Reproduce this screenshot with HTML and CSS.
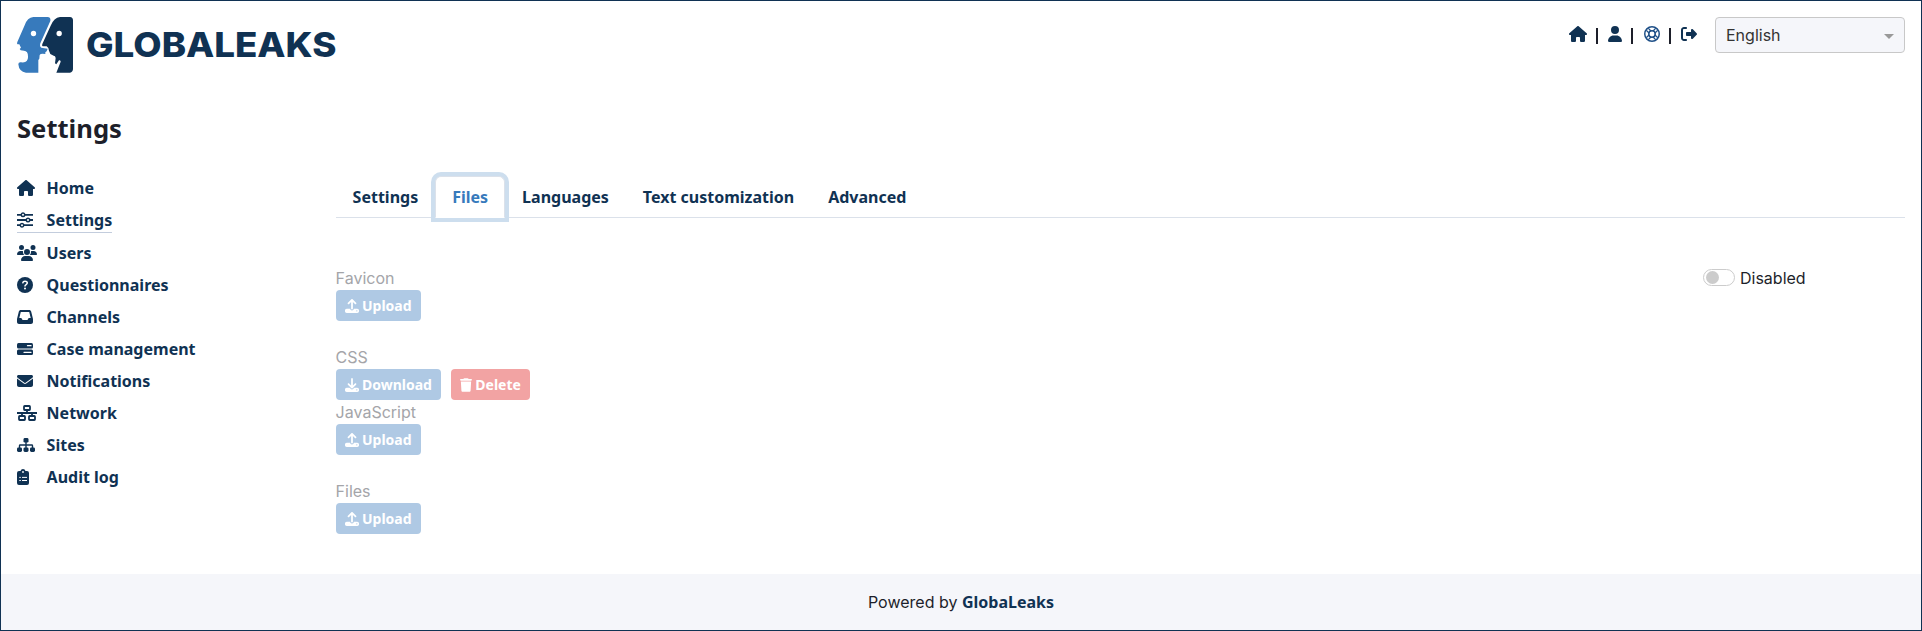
FILE: index.html
```html
<!DOCTYPE html>
<html lang="en">
<head>
<meta charset="utf-8">
<title>GlobaLeaks - Settings</title>
<link rel="stylesheet" href="styles.css">
</head>
<body>
<svg class="defs" width="0" height="0">
  <symbol id="house" viewBox="0 0 576 512"><path d="M575.8 255.5c0 18-15 32.1-32 32.1l-32 0 .7 160.2c0 2.7-.2 5.4-.5 8.1l0 16.2c0 22.1-17.9 40-40 40l-16 0c-1.1 0-2.2 0-3.3-.1c-1.4 .1-2.8 .1-4.2 .1L416 512l-24 0c-22.1 0-40-17.9-40-40l0-24 0-64c0-17.7-14.3-32-32-32l-64 0c-17.7 0-32 14.3-32 32l0 64 0 24c0 22.1-17.9 40-40 40l-24 0-31.9 0c-1.5 0-3-.1-4.5-.2c-1.2 .1-2.4 .2-3.6 .2l-16 0c-22.1 0-40-17.9-40-40l0-112c0-.9 0-1.9 .1-2.8l0-69.7-32 0c-18 0-32-14-32-32.1c0-9 3-17 10-24L266.4 8c7-7 15-8 22-8s15 2 21 7L564.8 231.5c8 7 12 15 11 24z"/></symbol>
  <symbol id="upload" viewBox="0 0 512 512"><path d="M288 109.3V352c0 17.700-14.300 32-32 32s-32-14.300-32-32V109.300l-73.400 73.400c-12.500 12.500-32.800 12.500-45.300 0s-12.500-32.800 0-45.300l128-128c12.500-12.500 32.800-12.500 45.300 0l128 128c12.500 12.500 12.500 32.800 0 45.300s-32.800 12.500-45.300 0L288 109.300zM64 352H192c0 35.300 28.700 64 64 64s64-28.700 64-64H448c35.300 0 64 28.700 64 64v32c0 35.300-28.700 64-64 64H64c-35.300 0-64-28.700-64-64v-32c0-35.300 28.700-64 64-64zM432 456a24 24 0 1 0 0-48 24 24 0 1 0 0 48z"/></symbol>
</svg>
<div class="page">
  <header class="header">
    <svg class="logo" width="322" height="58" viewBox="0 0 322 58">
      <g transform="scale(.33333) translate(-21 -21)">
        <path fill="#377abc" d="M70 21H113Q123 22 121 33L91 100Q88 109 94 113L103 115L113 116L110 124L106 127V132Q92 129 89 135L88 146L85 150V188H48Q27 185 25 163Q25 156 33 157Q54 160 54 142Q55 123 42 122L32 121L29 117L33 113L28 103H23Q20 101 22 96L44 46Q52 22 70 21Z"/>
        <path fill="#103253" d="M150 21H180Q189 22 189 31V178Q188 187 180 188H139L152 155Q152 149 147 151L139 163L135 160L137 144Q136 137 131 137L121 132L117 122L115 114L110 109H98Q95 107 97 102L122 47Q132 23 150 21Z"/>
        <circle cx="70.500" cy="70.500" r="8" fill="#fff"/><circle cx="147.500" cy="70.500" r="8" fill="#fff"/>
      </g>
      <text class="wordmark" x="69" y="39.700" textLength="250.500" lengthAdjust="spacingAndGlyphs">GLOBALEAKS</text>
    </svg>
    <div class="tools">
      <svg class="i" width="18" height="16"><use href="#house"/></svg>
      <span class="bar"></span>
      <svg class="i" width="14" height="16" viewBox="0 0 448 512"><path d="M224 256A128 128 0 1 0 224 0a128 128 0 1 0 0 256zm-45.700 48C79.800 304 0 383.800 0 482.300C0 498.700 13.300 512 29.700 512l388.600 0c16.400 0 29.700-13.300 29.700-29.700C448 383.800 368.200 304 269.700 304l-91.400 0z"/></svg>
      <span class="bar"></span>
      <svg class="ring" width="16" height="16" viewBox="0 0 16 16"><circle cx="8" cy="8" r="7.250"/><circle cx="8" cy="8" r="3.200"/><path d="M2.400 4.400l2.800 2.800M4.400 2.400l2.800 2.800M11.600 2.400l-2.800 2.800M13.600 4.400l-2.800 2.800M2.400 11.600l2.800-2.800M4.400 13.600l2.800-2.800M11.600 13.600l-2.800-2.800M13.600 11.600l-2.800-2.800"/></svg>
      <span class="bar"></span>
      <svg class="i" width="16" height="16" viewBox="0 0 512 512"><path d="M377.900 105.900L500.700 228.700c7.200 7.200 11.300 17.100 11.300 27.300s-4.100 20.100-11.300 27.300L377.900 406.100c-6.400 6.400-15 9.900-24 9.900c-18.700 0-33.900-15.200-33.900-33.900l0-62.100-128 0c-17.700 0-32-14.300-32-32l0-64c0-17.700 14.300-32 32-32l128 0 0-62.100c0-18.700 15.200-33.900 33.900-33.900c9 0 17.600 3.600 24 9.900zM160 96L96 96c-17.700 0-32 14.300-32 32l0 256c0 17.700 14.300 32 32 32l64 0c17.700 0 32 14.300 32 32s-14.300 32-32 32l-64 0c-53 0-96-43-96-96L0 128C0 75 43 32 96 32l64 0c17.700 0 32 14.300 32 32s-14.300 32-32 32z"/></svg>
      <div class="select"><span>English</span><i class="caret"></i></div>
    </div>
  </header>
  <h1 class="title">Settings</h1>
  <div class="main">
    <nav class="side">
      <a><svg class="i" width="18" height="16"><use href="#house"/></svg>Home</a>
      <a class="current"><svg class="i" width="16" height="16" viewBox="0 0 16 16"><path d="M0 1.900h3.600a2.600 2.600 0 0 1 4.800 0H16v1.800H8.400a2.600 2.600 0 0 1-4.800 0H0zM0 7.100h8.600a2.600 2.600 0 0 1 4.800 0H16v1.800h-2.600a2.600 2.600 0 0 1-4.800 0H0zM0 12.300h2.600a2.600 2.600 0 0 1 4.800 0H16v1.800H7.400a2.600 2.600 0 0 1-4.800 0H0z"/><g fill="#fff"><circle cx="6" cy="2.800" r="1"/><circle cx="11" cy="8" r="1"/><circle cx="5" cy="13.200" r="1"/></g></svg>Settings</a>
      <a><svg class="i" width="20" height="16" viewBox="0 0 640 512"><path d="M144 0a80 80 0 1 1 0 160A80 80 0 1 1 144 0zM512 0a80 80 0 1 1 0 160A80 80 0 1 1 512 0zM0 298.700C0 239.800 47.800 192 106.700 192h42.700c15.900 0 31 3.500 44.600 9.700c-1.300 7.200-1.900 14.700-1.900 22.300c0 38.200 16.800 72.500 43.300 96H21.300C9.600 320 0 310.400 0 298.700zM405.300 320h-.7c26.600-23.500 43.300-57.800 43.300-96c0-7.600-.7-15-1.900-22.300c13.600-6.300 28.700-9.700 44.600-9.700h42.700C592.200 192 640 239.800 640 298.700c0 11.800-9.600 21.300-21.300 21.300H405.300zM224 224a96 96 0 1 1 192 0 96 96 0 1 1-192 0zM128 485.300C128 411.700 187.700 352 261.300 352H378.700C452.300 352 512 411.700 512 485.300c0 14.700-11.900 26.700-26.700 26.700H154.700c-14.700 0-26.700-11.900-26.700-26.700z"/></svg>Users</a>
      <a><svg class="i" width="16" height="16" viewBox="0 0 16 16"><circle cx="8" cy="8" r="8"/><path fill="none" stroke="#fff" stroke-width="1.500" stroke-linecap="round" d="M5.800 5.800C6 4.500 6.800 4.300 8 4.300c1.500 0 2.300.8 2.300 1.800C10.300 7.600 8 7.500 8 9"/><circle cx="8" cy="11.500" r="1" fill="#fff"/></svg>Questionnaires</a>
      <a><svg class="i" width="16" height="16" viewBox="0 0 512 512"><path d="M121 32C91.600 32 66 52 58.900 80.500L1.900 308.400C.6 313.500 0 318.700 0 323.900L0 416c0 35.300 28.700 64 64 64l384 0c35.300 0 64-28.700 64-64l0-92.100c0-5.200-.6-10.400-1.900-15.500l-57-227.900C446 52 420.400 32 391 32L121 32zm0 64l270 0 48 192-51.200 0c-12.100 0-23.200 6.800-28.600 17.700l-14.300 28.600c-5.400 10.800-16.500 17.700-28.600 17.700l-120.400 0c-12.100 0-23.200-6.800-28.600-17.700l-14.300-28.600c-5.400-10.800-16.500-17.700-28.600-17.700L73 288 121 96z"/></svg>Channels</a>
      <a><svg class="i" width="16" height="16" viewBox="0 0 16 16"><rect y="2" width="16" height="5.400" rx="1.500"/><rect y="8.600" width="16" height="5.400" rx="1.500"/><path fill="none" stroke="#fff" stroke-width="1.300" stroke-linecap="round" d="M10.500 4.700h3.500M7 11.300h7"/></svg>Case management</a>
      <a><svg class="i" width="16" height="16" viewBox="0 0 512 512"><path d="M48 64C21.500 64 0 85.500 0 112c0 15.100 7.100 29.300 19.200 38.400L236.800 313.600c11.400 8.500 27 8.500 38.400 0L492.800 150.400c12.100-9.100 19.200-23.300 19.200-38.400c0-26.500-21.500-48-48-48L48 64zM0 176L0 384c0 35.300 28.700 64 64 64l384 0c35.300 0 64-28.700 64-64l0-208L294.400 339.200c-22.800 17.100-54 17.100-76.800 0L0 176z"/></svg>Notifications</a>
      <a><svg class="net" width="20" height="16" viewBox="0 0 20 16"><rect x="7" y="1" width="6" height="4" rx=".7"/><rect x="2" y="11" width="6" height="4" rx=".7"/><rect x="12" y="11" width="6" height="4" rx=".7"/><path d="M0 8h20M10 5v3M5 8v3M15 8v3"/></svg>Network</a>
      <a><svg class="i" width="18" height="16" viewBox="0 0 18 16"><rect x="6.500" y="1" width="5" height="4.600" rx="1.400"/><rect y="10.400" width="5" height="4.600" rx="1.400"/><rect x="6.500" y="10.400" width="5" height="4.600" rx="1.400"/><rect x="13" y="10.400" width="5" height="4.600" rx="1.400"/><path fill="none" stroke="#103253" stroke-width="1.400" d="M9 5v6M2.500 11V8.700q0-.7.700-.7h11.600q.7 0 .7.700V11"/></svg>Sites</a>
      <a><svg class="i" width="12" height="16" viewBox="0 0 12 16"><path d="M2 2h1.500a2.600 2.600 0 0 1 5 0H10q2 0 2 2v10q0 2-2 2H2q-2 0-2-2V4q0-2 2-2z"/><circle cx="6" cy="3" r=".9" fill="#fff"/><path fill="none" stroke="#fff" d="M2.300 8.400h1.500M5 8.400h5M2.300 11.500h1.500M5 11.500h5"/></svg>Audit log</a>
    </nav>
    <main class="content">
      <div class="tabs"><a>Settings</a><a class="active">Files</a><a>Languages</a><a>Text customization</a><a>Advanced</a></div>
      <div class="pane">
        <div class="files">
          <label>Favicon</label>
          <div class="row gap"><button class="btn"><svg width="14" height="14"><use href="#upload"/></svg>Upload</button></div>
          <label>CSS</label>
          <div class="row"><button class="btn"><svg width="14" height="14" viewBox="0 0 512 512"><path d="M288 32c0-17.700-14.300-32-32-32s-32 14.300-32 32V274.700l-73.400-73.400c-12.500-12.500-32.800-12.500-45.300 0s-12.500 32.800 0 45.300l128 128c12.500 12.500 32.800 12.500 45.300 0l128-128c12.500-12.500 12.500-32.800 0-45.300s-32.800-12.500-45.300 0L288 274.700V32zM64 352c-35.300 0-64 28.700-64 64v32c0 35.300 28.700 64 64 64H448c35.300 0 64-28.700 64-64V416c0-35.300-28.700-64-64-64H346.500l-45.300 45.300c-25 25-65.500 25-90.500 0L165.500 352H64zm368 56a24 24 0 1 1 0 48 24 24 0 1 1 0-48z"/></svg>Download</button><button class="btn danger"><svg width="12" height="14" viewBox="0 0 448 512"><path d="M135.200 17.700L128 32H32C14.300 32 0 46.300 0 64S14.300 96 32 96H416c17.700 0 32-14.300 32-32s-14.300-32-32-32H320l-7.200-14.300C307.400 6.800 296.300 0 284.200 0H163.800c-12.100 0-23.200 6.800-28.600 17.700zM416 128H32L53.200 467c1.600 25.300 22.600 45 47.900 45H346.900c25.300 0 46.300-19.700 47.900-45L416 128z"/></svg>Delete</button></div>
          <label>JavaScript</label>
          <div class="row gap"><button class="btn"><svg width="14" height="14"><use href="#upload"/></svg>Upload</button></div>
          <label>Files</label>
          <div class="row"><button class="btn"><svg width="14" height="14"><use href="#upload"/></svg>Upload</button></div>
        </div>
        <div class="toggle"><span class="switch"></span>Disabled</div>
      </div>
    </main>
  </div>
  <footer class="footer"><span>Powered by <b>GlobaLeaks</b></span></footer>
</div>
</body>
</html>
```
FILE: styles.css
```css
* { box-sizing: border-box; }
body { margin: 0; background: #fff; color: #1d1f2a; font: 16px/24px Inter, sans-serif; }
.defs { display: block; }
.page { height: 631px; border: 1px solid #103253; display: flex; flex-direction: column; }
.header { display: flex; justify-content: space-between; height: 96px; padding: 16px 16px 0; }
.logo { flex: none; }
.wordmark { font: 800 34px Inter, sans-serif; fill: #103253; }
.i { fill: #103253; flex: none; }
.ring { fill: none; stroke: #1f5088; stroke-width: 1.500; }
.ring path { stroke-width: 1.300; }
.net { fill: none; stroke: #103253; stroke-width: 1.800; }
.tools { display: flex; align-items: flex-start; }
.tools > svg { margin-top: 9px; }
.bar { width: 2px; height: 16px; background: #1d1f2a; margin: 11px 10.500px 0 9px; }
.select { display: flex; align-items: center; justify-content: space-between; width: 190px; height: 36px; margin-left: 18px; padding: 0 10px; border: 1px solid #c8c8c8; border-radius: 4px; background: #f5f6fa; color: #333; }
.caret { border: 5px solid transparent; border-top-color: #999; border-bottom: 0; margin-top: 2px; }
.title { margin: 16px 16px 0; font: 700 25.600px/31px "Noto Sans", sans-serif; }
.main { display: flex; margin-top: 32px; padding: 0 16px; flex: 1; }
.side { width: 318.600px; display: flex; flex-direction: column; align-items: flex-start; gap: 8px; font: 700 16px/24px "Noto Sans", sans-serif; color: #103253; }
.side a { display: flex; align-items: center; height: 24px; }
.side a svg { margin-right: 9.600px; }
.side a svg[width="18"] { margin-right: 11.600px; }
.side a svg[width="16"] { margin-right: 13.600px; }
.side a svg[width="12"] { margin-right: 17.600px; }
.side .current { height: 25px; border-bottom: 1px solid #c3cddd; }
.content { flex: 1; }
.tabs { display: flex; height: 42px; border-bottom: 1px solid #dbe1ea; font: 700 16px/24px "Noto Sans", sans-serif; color: #103253; }
.tabs a { height: 42px; padding: 8px 16px; border: 1px solid transparent; }
.tabs .active { color: #377abc; background: #fff; border-radius: 6px 6px 0 0; border-color: #dbe1ea #dbe1ea #fff; box-shadow: 0 0 0 4px #cddeee; }
.pane { display: flex; justify-content: space-between; padding-top: 48px; }
.files label { display: block; color: #a4a5a9; height: 24px; }
.row { display: flex; gap: 10px; }
.gap { margin-bottom: 24px; }
.btn { display: flex; align-items: center; gap: 3.400px; height: 31px; padding: 0 9px; border: 0; border-radius: 4px; background: #afc9e4; color: #fff; font: 700 14px/21px "Noto Sans", sans-serif; }
.btn svg { fill: #fff; }
.danger { background: #f2a3a3; }
.toggle { display: flex; height: 24px; width: 202px; gap: 5px; }
.switch { width: 32px; height: 17px; margin-top: 3px; padding: 1px; border: 1px solid #ccc; border-radius: 9px; }
.switch::before { content: ""; display: block; width: 13px; height: 13px; margin-left: 1px; border-radius: 50%; background: #ccc; }
.footer { height: 56px; background: #f5f6fa; display: flex; align-items: center; justify-content: center; }
.footer b { font-family: "Noto Sans", sans-serif; color: #103253; }
```
